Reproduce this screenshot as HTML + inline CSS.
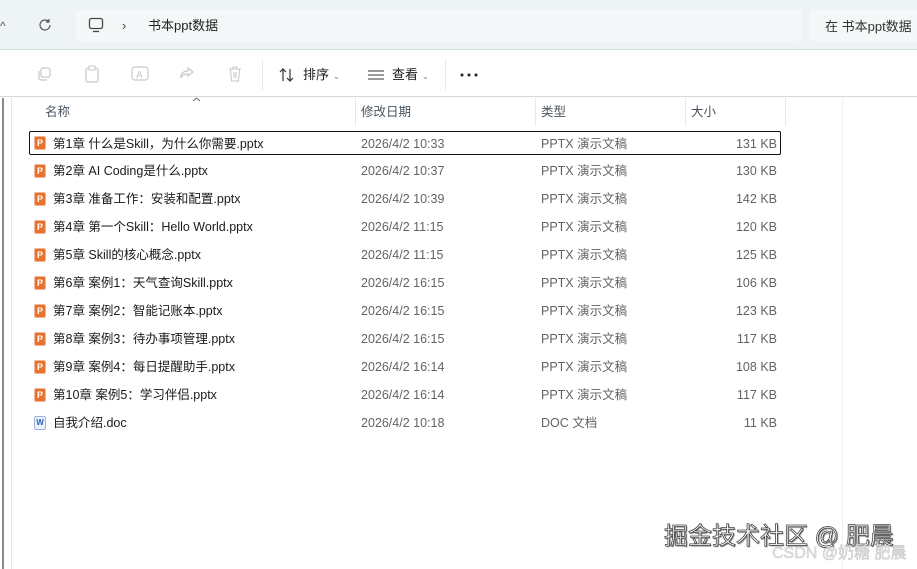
<!DOCTYPE html>
<html><head><meta charset="utf-8"><style>
*{margin:0;padding:0;box-sizing:border-box}
body{width:917px;height:569px;overflow:hidden;background:#fff;font-family:"Liberation Sans","Noto Sans CJK SC",sans-serif;position:relative;color:#1a1a1a}
.top{position:absolute;left:0;top:0;width:917px;height:50px;background:#eef3f5;border-bottom:1px solid #d3dde0}
.addr{position:absolute;left:76px;top:10px;width:726px;height:31px;background:#f5f8f9;border-radius:4px}
.search{position:absolute;left:810px;top:10px;width:120px;height:31px;background:#f5f8f9;border-radius:4px;font-size:13px;color:#333;line-height:33px;padding-left:15px}
.t{position:absolute;font-size:13px;white-space:nowrap;line-height:18px}
.tb{position:absolute;left:0;top:51px;width:917px;height:46px;background:#fff;border-bottom:1px solid #cfdadd}
.ic{position:absolute;color:#c4c9cc}
.hd{position:absolute;top:99px;height:28px;font-size:12.5px;color:#4a5560;line-height:26px}
.vl{position:absolute;top:98px;width:1px;height:28px;background:#e6e9eb}
.row{position:absolute;left:29px;width:752px;height:24px;font-size:12.5px}
.row span{position:absolute;top:1px;line-height:23px;height:23px;white-space:nowrap}
.n{left:24px;color:#1a1a1a}.d{left:332px;color:#5f6468}.y{left:512px;color:#5f6468}.s{right:4px;color:#5f6468}
.pi,.wi{font-style:normal;font-family:"Liberation Sans",sans-serif}
.pi{position:absolute;left:5px;top:5px;width:12px;height:14px;background:#e8722d;border-radius:2px;color:#fff;font-size:9px;font-weight:bold;text-align:center;line-height:12px;border:1px solid #f0b89a}
.wi{position:absolute;left:5px;top:5px;width:12px;height:14px;background:#e9f0fb;border:1px solid #9bb4dc;border-radius:2px;color:#2b5fb5;font-size:8px;font-weight:bold;text-align:center;line-height:12px}
</style></head><body>
<div class="top">
<div class="t" style="left:0;top:17px;color:#555;font-size:12px">^</div>
<svg style="position:absolute;left:38px;top:18px" width="14" height="14" viewBox="0 0 14 14"><path d="M12 7a5 5 0 1 1-1.5-3.6M11 1v3H8" fill="none" stroke="#555" stroke-width="1.2"/></svg>
<div class="addr"></div>
<svg style="position:absolute;left:88px;top:17px" width="16" height="16" viewBox="0 0 16 16"><rect x="1.5" y="1.5" width="13" height="10" rx="2" fill="none" stroke="#444" stroke-width="1.3"/><path d="M5 14.5h6" stroke="#444" stroke-width="1.3"/></svg>
<div class="t" style="left:122px;top:17px;color:#444">›</div>
<div class="t" style="left:148px;top:17px;color:#222">书本ppt数据</div>
<div class="search">在 书本ppt数据</div>
</div>
<div class="tb">
<svg class="ic" style="left:36px;top:15px" width="16" height="16" viewBox="0 0 16 16"><rect x="5" y="2" width="9" height="9" rx="2" fill="none" stroke="#c4c9cc" stroke-width="1.2"/><path d="M3 5v7a2 2 0 0 0 2 2h6" fill="none" stroke="#c4c9cc" stroke-width="1.2"/></svg>
<svg class="ic" style="left:84px;top:14px" width="16" height="18" viewBox="0 0 16 18"><rect x="2" y="3" width="12" height="14" rx="2" fill="none" stroke="#c4c9cc" stroke-width="1.2"/><rect x="5" y="1" width="6" height="4" fill="#fff" stroke="#c4c9cc"/></svg>
<svg class="ic" style="left:131px;top:14px" width="18" height="18" viewBox="0 0 18 18"><rect x="1" y="2" width="16" height="13" rx="3" fill="none" stroke="#c4c9cc" stroke-width="1.2"/><text x="5" y="13" font-size="10" fill="#c4c9cc" font-family="Liberation Sans">A</text></svg>
<svg class="ic" style="left:179px;top:15px" width="16" height="16" viewBox="0 0 16 16"><path d="M9 2l5 4-5 4V8c-4 0-6 1-7 4 0-5 3-7 7-7z" fill="none" stroke="#c4c9cc" stroke-width="1.2"/></svg>
<svg class="ic" style="left:228px;top:15px" width="14" height="16" viewBox="0 0 14 16"><path d="M1 3h12M5 3V1h4v2M2.5 3l1 12h7l1-12M6 6v6M8 6v6" fill="none" stroke="#c4c9cc" stroke-width="1.1"/></svg>
<div style="position:absolute;left:262px;top:9px;width:1px;height:30px;background:#e6e9eb"></div>
<svg style="position:absolute;left:279px;top:17px" width="16" height="14" viewBox="0 0 16 14"><path d="M4 13V1M1 4l3-3 3 3M11 1v12M8 10l3 3 3-3" fill="none" stroke="#333" stroke-width="1.2"/></svg>
<div class="t" style="left:303px;top:15px">排序 <span style="color:#888;font-size:9px">⌄</span></div>
<svg style="position:absolute;left:368px;top:19px" width="16" height="10"><path d="M0 1h16M0 5h16M0 9h16" stroke="#333" stroke-width="1"/></svg>
<div class="t" style="left:392px;top:15px">查看 <span style="color:#888;font-size:9px">⌄</span></div>
<div style="position:absolute;left:445px;top:9px;width:1px;height:30px;background:#e6e9eb"></div>
<svg style="position:absolute;left:460px;top:22px" width="20" height="4"><circle cx="2" cy="2" r="1.5" fill="#222"/><circle cx="9" cy="2" r="1.5" fill="#222"/><circle cx="16" cy="2" r="1.5" fill="#222"/></svg>
</div>
<div style="position:absolute;left:2px;top:98px;width:2px;height:471px;background:#8a8a8a"></div>
<div style="position:absolute;left:11px;top:98px;width:1px;height:471px;background:#e3e6e8"></div>
<div style="position:absolute;left:842px;top:98px;width:1px;height:471px;background:#eef0f1"></div>
<svg style="position:absolute;left:192px;top:97px" width="9" height="5"><path d="M1 4l3.5-3 3.5 3" fill="none" stroke="#666"/></svg>
<div class="hd" style="left:45px">名称</div>
<div class="vl" style="left:355px"></div>
<div class="hd" style="left:361px">修改日期</div>
<div class="vl" style="left:535px"></div>
<div class="hd" style="left:541px">类型</div>
<div class="vl" style="left:685px"></div>
<div class="hd" style="left:691px">大小</div>
<div class="vl" style="left:785px"></div>

<div class="row" style="top:131px;border:1px solid #111;border-radius:2px"><i class="pi" style="left:4px;top:4px">P</i><span class="n" style="left:23px;top:1px;line-height:22px">第1章 什么是Skill，为什么你需要.pptx</span><span class="d" style="left:331px;top:1px;line-height:22px">2026/4/2 10:33</span><span class="y" style="left:511px;top:1px;line-height:22px">PPTX 演示文稿</span><span class="s" style="right:3px;top:1px;line-height:22px">131 KB</span></div>
<div class="row" style="top:159px"><i class="pi">P</i><span class="n">第2章 AI Coding是什么.pptx</span><span class="d">2026/4/2 10:37</span><span class="y">PPTX 演示文稿</span><span class="s">130 KB</span></div>
<div class="row" style="top:187px"><i class="pi">P</i><span class="n">第3章 准备工作：安装和配置.pptx</span><span class="d">2026/4/2 10:39</span><span class="y">PPTX 演示文稿</span><span class="s">142 KB</span></div>
<div class="row" style="top:215px"><i class="pi">P</i><span class="n">第4章 第一个Skill：Hello World.pptx</span><span class="d">2026/4/2 11:15</span><span class="y">PPTX 演示文稿</span><span class="s">120 KB</span></div>
<div class="row" style="top:243px"><i class="pi">P</i><span class="n">第5章 Skill的核心概念.pptx</span><span class="d">2026/4/2 11:15</span><span class="y">PPTX 演示文稿</span><span class="s">125 KB</span></div>
<div class="row" style="top:271px"><i class="pi">P</i><span class="n">第6章 案例1：天气查询Skill.pptx</span><span class="d">2026/4/2 16:15</span><span class="y">PPTX 演示文稿</span><span class="s">106 KB</span></div>
<div class="row" style="top:299px"><i class="pi">P</i><span class="n">第7章 案例2：智能记账本.pptx</span><span class="d">2026/4/2 16:15</span><span class="y">PPTX 演示文稿</span><span class="s">123 KB</span></div>
<div class="row" style="top:327px"><i class="pi">P</i><span class="n">第8章 案例3：待办事项管理.pptx</span><span class="d">2026/4/2 16:15</span><span class="y">PPTX 演示文稿</span><span class="s">117 KB</span></div>
<div class="row" style="top:355px"><i class="pi">P</i><span class="n">第9章 案例4：每日提醒助手.pptx</span><span class="d">2026/4/2 16:14</span><span class="y">PPTX 演示文稿</span><span class="s">108 KB</span></div>
<div class="row" style="top:383px"><i class="pi">P</i><span class="n">第10章 案例5：学习伴侣.pptx</span><span class="d">2026/4/2 16:14</span><span class="y">PPTX 演示文稿</span><span class="s">117 KB</span></div>
<div class="row" style="top:411px"><i class="wi">W</i><span class="n">自我介绍.doc</span><span class="d">2026/4/2 10:18</span><span class="y">DOC 文档</span><span class="s">11 KB</span></div>

<div class="t" style="left:664px;top:521px;font-size:24px;line-height:32px;color:#fff;-webkit-text-stroke:0.8px #444;text-shadow:1px 1px 1px #777">掘金技术社区 @ 肥晨</div>
<div class="t" style="left:772px;top:543px;font-size:16px;line-height:22px;color:#e6e6e6;-webkit-text-stroke:0.4px #bbb">CSDN @奶糖 肥晨</div>
</body></html>
